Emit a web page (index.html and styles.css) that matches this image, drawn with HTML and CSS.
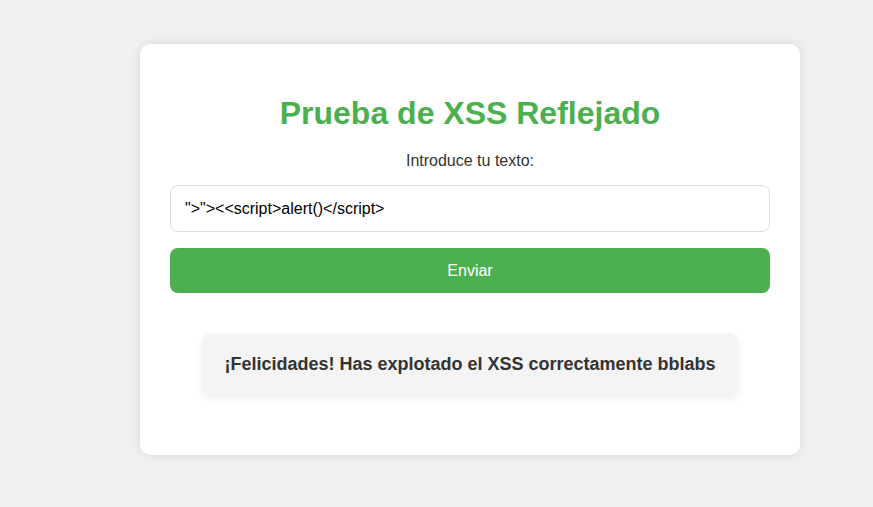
FILE: index.html
```html
<!DOCTYPE html>
<html lang="es">
<head>
<meta charset="utf-8">
<title>Prueba de XSS Reflejado</title>
<link rel="stylesheet" href="styles.css">
</head>
<body>
<div class="card">
  <h1 class="title">Prueba de XSS Reflejado</h1>
  <form class="form">
    <label class="label" for="q">Introduce tu texto:</label>
    <input class="input" id="q" type="text" value="&quot;&gt;&quot;&gt;&lt;&lt;script&gt;alert()&lt;/script&gt;">
    <button class="btn" type="button">Enviar</button>
  </form>
  <div class="result">
    <div class="message">¡Felicidades! Has explotado el XSS correctamente bblabs</div>
  </div>
</div>
</body>
</html>
```
FILE: styles.css
```css
html, body {
  margin: 0;
  padding: 0;
}
body {
  background: #f0f0f0;
  font-family: "Liberation Sans", Arial, sans-serif;
  color: #333;
  padding: 44px 0 0 140px;
  height: 507px;
  box-sizing: border-box;
}
.card {
  width: 660px;
  box-sizing: border-box;
  background: #fff;
  border-radius: 10px;
  box-shadow: 0 0 10px rgba(0, 0, 0, 0.1);
  padding: 30px;
  text-align: center;
}
.title {
  color: #4caf50;
  font-size: 32px;
  font-weight: bold;
  margin: 21px 0 0;
  line-height: 37px;
}
.form {
  display: flex;
  flex-direction: column;
  margin-top: 20px;
}
.label {
  font-size: 16px;
  line-height: 18px;
  margin-bottom: 15px;
  color: #333;
}
.input {
  height: 47px;
  box-sizing: border-box;
  border: 1px solid #ddd;
  border-radius: 8px;
  padding: 0 14px;
  font-family: "Liberation Sans", Arial, sans-serif;
  font-size: 16px;
  color: #000;
  outline: none;
}
.btn {
  margin-top: 16px;
  height: 45px;
  border: none;
  border-radius: 8px;
  background: #4caf50;
  color: #fff;
  font-family: "Liberation Sans", Arial, sans-serif;
  font-size: 16px;
}
.result {
  display: flex;
  justify-content: center;
  margin-top: 41px;
  margin-bottom: 31px;
}
.message {
  background: #f4f4f4;
  border-radius: 8px;
  box-shadow: 0 4px 8px rgba(0, 0, 0, 0.08);
  padding: 20px 22px;
  font-size: 18px;
  line-height: 20px;
  font-weight: bold;
  color: #333;
}
```
